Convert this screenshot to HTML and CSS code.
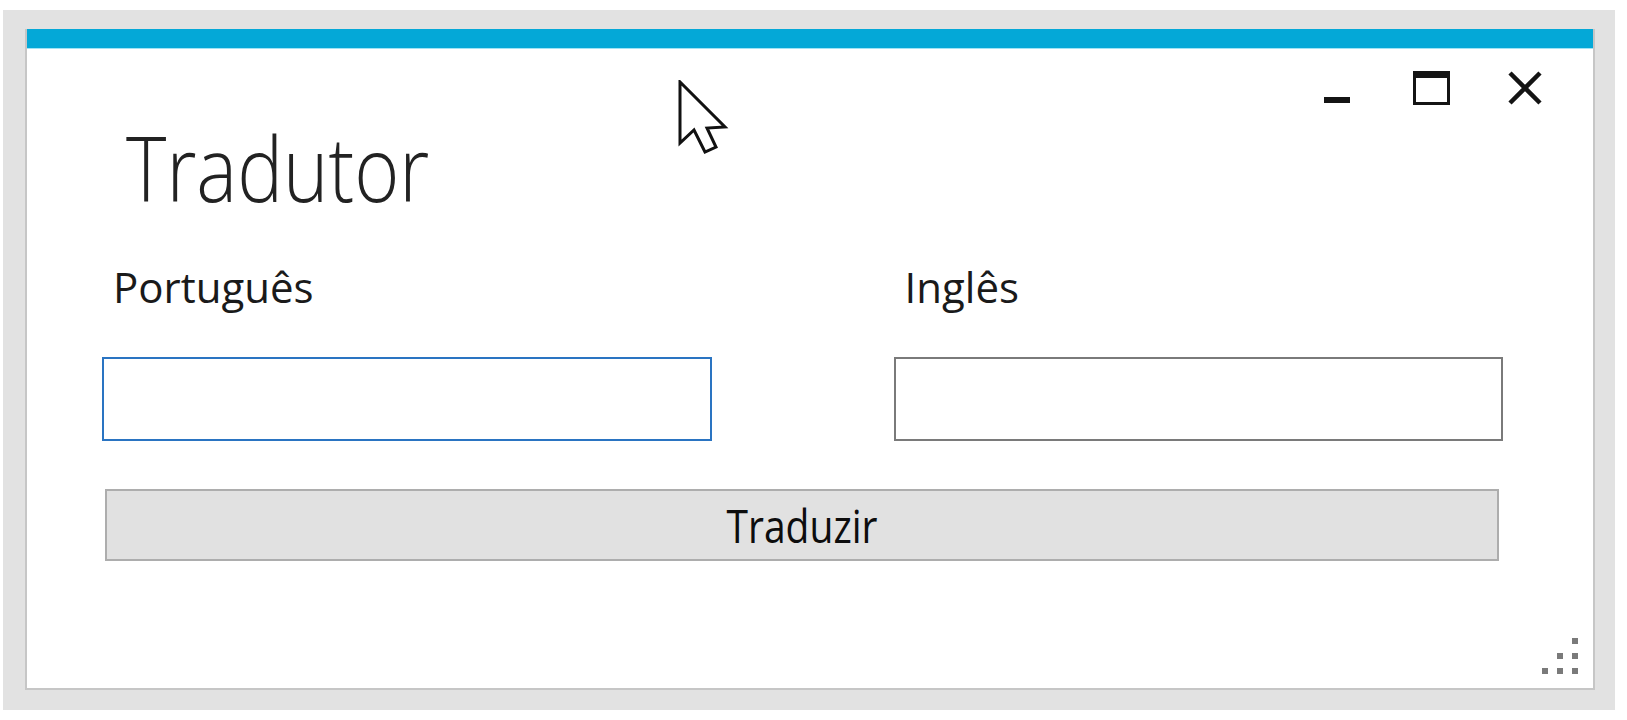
FILE: index.html
```html
<!DOCTYPE html>
<html lang="pt">
<head>
<meta charset="utf-8">
<title>Tradutor</title>
<link rel="stylesheet" href="styles.css">
</head>
<body>
<div class="screen">
  <div class="window">
    <div class="accent"></div>
    <div class="titlebar">
      <span class="ctl"><svg width="26" height="34" viewBox="0 0 26 34"><rect x="0" y="26" width="26" height="6" fill="#141414"/></svg></span>
      <span class="ctl"><svg width="37" height="34" viewBox="0 0 37 34"><rect x="1.5" y="2" width="34" height="30.5" fill="none" stroke="#141414" stroke-width="3"/><rect x="0" y="0" width="37" height="7" fill="#141414"/></svg></span>
      <span class="ctl"><svg width="36" height="34" viewBox="0 0 36 34"><path d="M3 2 L33 32 M33 2 L3 32" stroke="#141414" stroke-width="4.5" fill="none"/></svg></span>
    </div>
    <h1 class="title"><span>Tradutor</span></h1>
    <div class="fields">
      <div class="field">
        <label class="label"><span>Português</span></label>
        <input class="box box-focused" type="text">
      </div>
      <div class="field">
        <label class="label"><span>Inglês</span></label>
        <input class="box" type="text">
      </div>
    </div>
    <button class="action" type="button"><span>Traduzir</span></button>
    <div class="grip">
      <svg width="36" height="36" viewBox="0 0 36 36">
        <rect x="30" y="0" width="6" height="6" fill="#7a7a7a"/>
        <rect x="15" y="15" width="6" height="6" fill="#7a7a7a"/>
        <rect x="30" y="15" width="6" height="6" fill="#7a7a7a"/>
        <rect x="0" y="30" width="6" height="6" fill="#7a7a7a"/>
        <rect x="15" y="30" width="6" height="6" fill="#7a7a7a"/>
        <rect x="30" y="30" width="6" height="6" fill="#7a7a7a"/>
      </svg>
    </div>
    <svg class="cursor" width="52" height="76" viewBox="0 0 52 76">
      <path d="M2 2 L2 63 L16 50 L27 72 L38 67 L29 48 L47 47 Z" fill="#ffffff" stroke="#111111" stroke-width="3" stroke-linejoin="miter"/>
    </svg>
  </div>
</div>
</body>
</html>
```

FILE: styles.css
```css
html, body {
  margin: 0;
  padding: 0;
  background: #ffffff;
}

body {
  font-family: "Open Sans", "Noto Sans", "Liberation Sans", sans-serif;
  color: #1a1a1a;
}

.screen {
  box-sizing: border-box;
  margin: 10px 0 0 3px;
  width: 1612px;
  height: 700px;
  padding: 19px 20px 20px 22px;
  background: #e2e2e2;
}

.window {
  position: relative;
  box-sizing: border-box;
  height: 661px;
  display: flex;
  flex-direction: column;
  background: #ffffff;
  border: 2px solid #c6c6c6;
  border-top: none;
}

.accent {
  height: 19px;
  background: #04a8d7;
  box-shadow: 0 1px 0 #9fe3f5;
}

.titlebar {
  display: flex;
  justify-content: flex-end;
  padding: 23px 21px 0 0;
  height: 34px;
}

.ctl {
  width: 94px;
  height: 34px;
  display: flex;
  justify-content: center;
}

.title {
  margin: 28px 0 0 99px;
  font-size: 77px;
  font-weight: 300;
  line-height: 80px;
  height: 80px;
  color: #222222;
}

.title span {
  display: inline-block;
  transform-origin: 0 70px;
  transform: scaleY(1.165);
}

.fields {
  display: grid;
  grid-template-columns: 1fr 1fr;
  column-gap: 182px;
  margin: 50px 90px 0 75px;
}

.field {
  display: flex;
  flex-direction: column;
}

.label {
  display: block;
  padding-left: 11px;
  font-size: 42px;
  line-height: 48px;
  height: 48px;
  color: #1a1a1a;
}

.box {
  box-sizing: border-box;
  margin: 46px 0 0 0;
  width: 100%;
  height: 84px;
  border: 2px solid #7a7a7a;
  background: #ffffff;
  outline: none;
  padding: 0;
}

.box-focused {
  border-color: #2a74c2;
}

.action {
  box-sizing: border-box;
  margin: 48px 94px 0 78px;
  height: 72px;
  padding: 6px 0 0 0;
  border: 2px solid #adadad;
  background: #e1e1e1;
  font-family: "Open Sans", "Noto Sans", "Liberation Sans", sans-serif;
  font-size: 39px;
  line-height: 62px;
  color: #0d0d0d;
  text-align: center;
}

.action span {
  display: inline-block;
  line-height: 62px;
  transform-origin: 50% 46px;
  transform: scaleY(1.18);
}

.grip {
  margin: auto 15px 14px 0;
  align-self: flex-end;
  height: 36px;
}

.grip svg {
  display: block;
}

.cursor {
  position: absolute;
  left: 651px;
  top: 51px;
}
```
